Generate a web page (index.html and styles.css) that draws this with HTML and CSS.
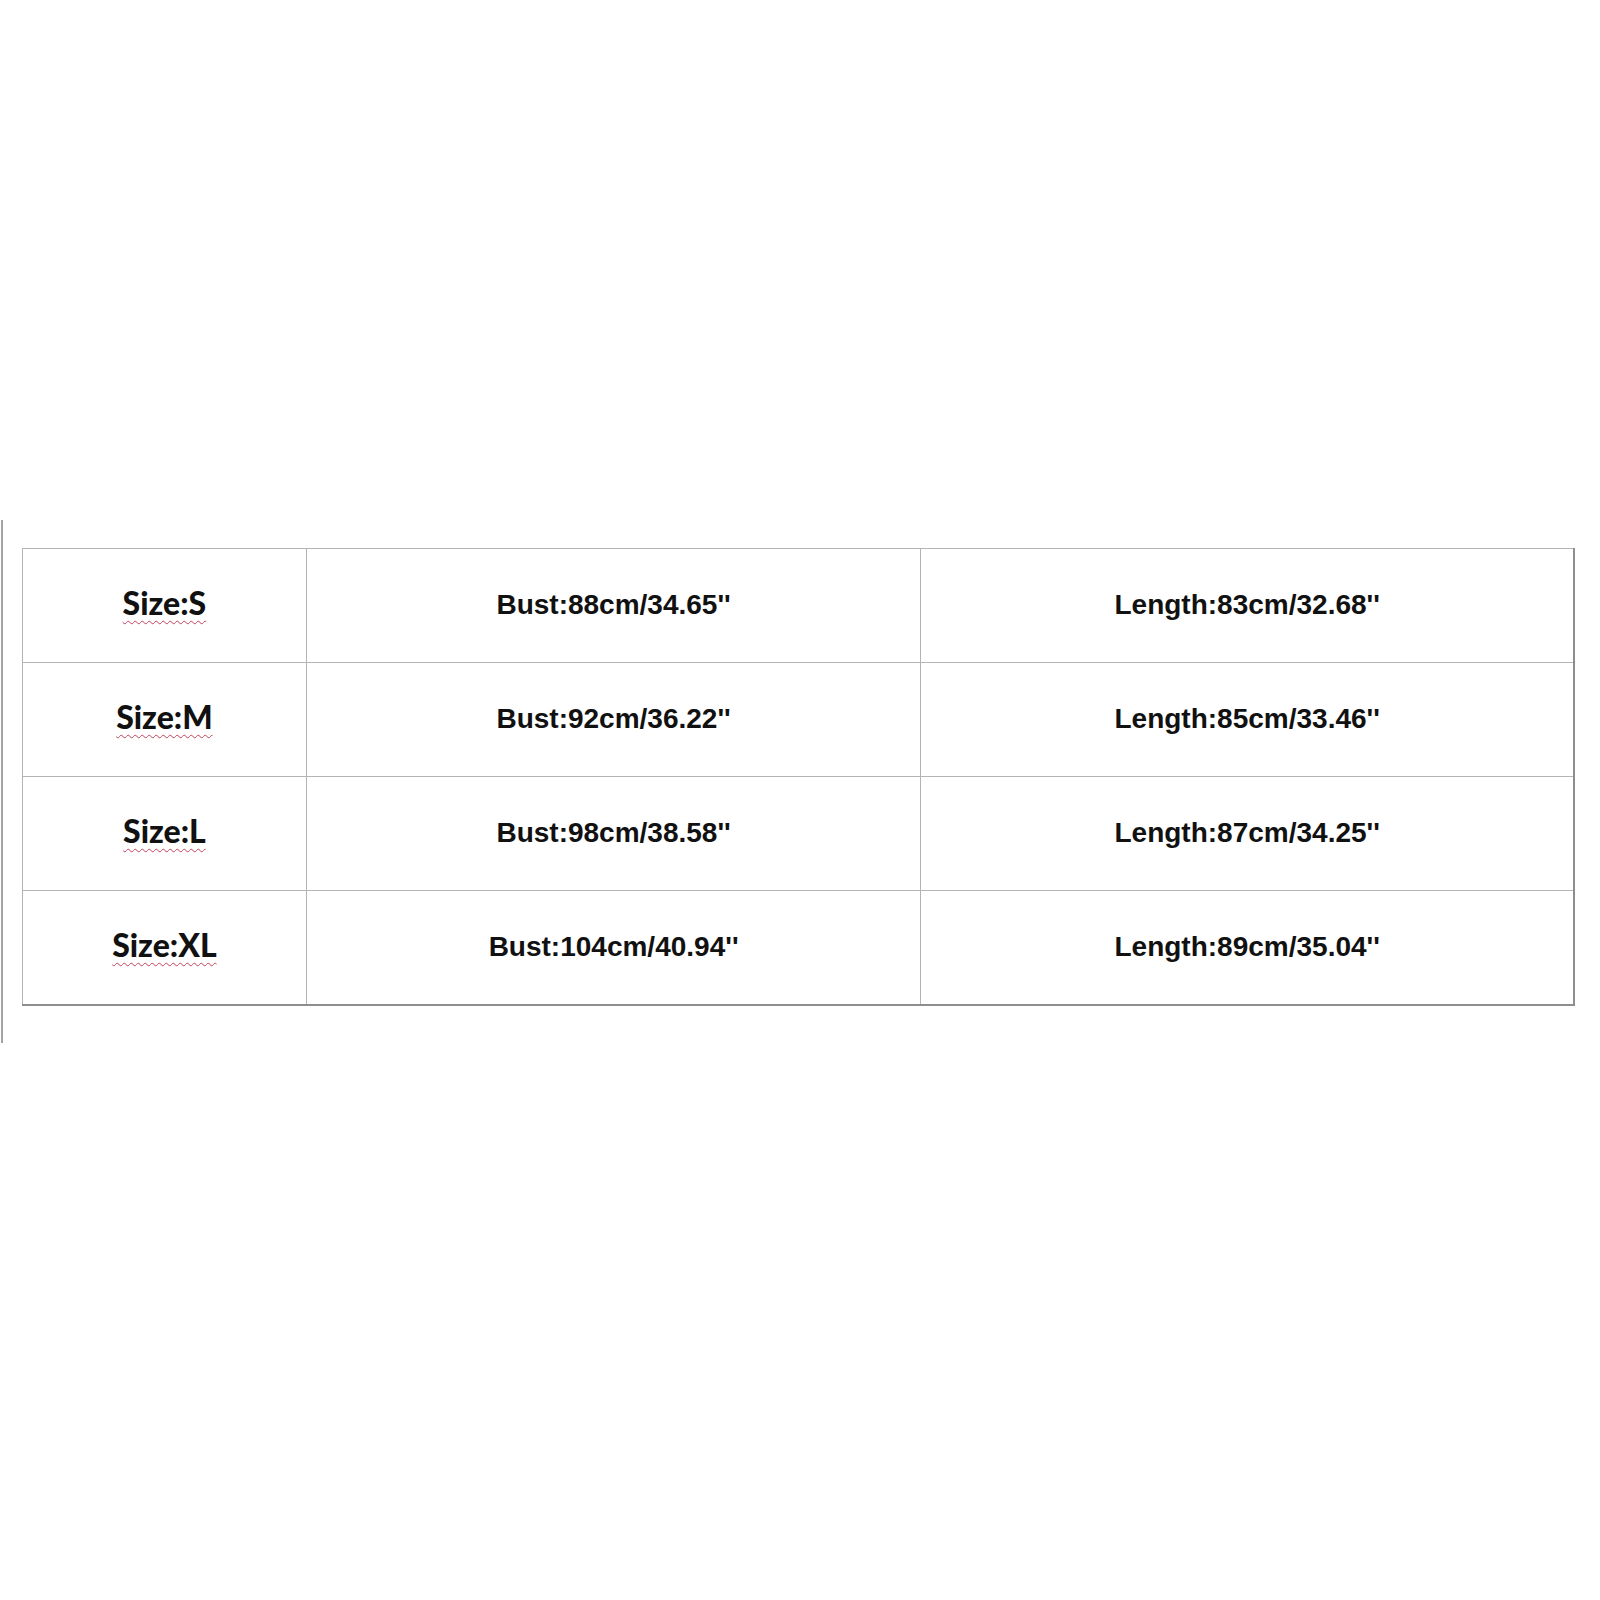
FILE: index.html
```html
<!DOCTYPE html>
<html>
<head>
<meta charset="utf-8">
<link rel="stylesheet" href="styles.css">
</head>
<body>
<div class="page">
  <div class="rule"></div>
  <table class="sizes">
    <tr>
      <td class="c-size"><span class="wavy">Size:S</span></td>
      <td class="c-bust">Bust:88cm/34.65''</td>
      <td class="c-len">Length:83cm/32.68''</td>
    </tr>
    <tr>
      <td class="c-size"><span class="wavy">Size:M</span></td>
      <td class="c-bust">Bust:92cm/36.22''</td>
      <td class="c-len">Length:85cm/33.46''</td>
    </tr>
    <tr>
      <td class="c-size"><span class="wavy">Size:L</span></td>
      <td class="c-bust">Bust:98cm/38.58''</td>
      <td class="c-len">Length:87cm/34.25''</td>
    </tr>
    <tr>
      <td class="c-size"><span class="wavy">Size:XL</span></td>
      <td class="c-bust">Bust:104cm/40.94''</td>
      <td class="c-len">Length:89cm/35.04''</td>
    </tr>
  </table>
</div>
</body>
</html>
```
FILE: styles.css
```css
html, body {
  margin: 0;
  padding: 0;
  background: #ffffff;
}
.page {
  display: flex;
  align-items: flex-start;
  padding-top: 520px;
  height: 1080px;
}
.rule {
  width: 2px;
  height: 523px;
  margin-left: 1px;
  background: #a3a3a3;
  flex: none;
}
.sizes {
  margin-top: 28px;
  margin-left: 19px;
  width: 1553px;
  border-collapse: collapse;
  border-right: 2px solid #8e8e8e;
  border-bottom: 2px solid #8e8e8e;
  font-family: "Liberation Sans", Arial, sans-serif;
  font-weight: bold;
  color: #111111;
}
.sizes td {
  border: 1px solid #b4b4b4;
  height: 111px;
  padding: 0 0 2px 0;
  text-align: center;
  vertical-align: middle;
  font-size: 28px;
}
.c-size { width: 283px; }
.c-bust { width: 614px; }
.c-len { width: 652px; }
.sizes td.c-size {
  font-family: Lato, "Open Sans", sans-serif;
  font-size: 32px;
  font-weight: 900;
  padding-bottom: 6px;
  height: 107px;
}
.wavy {
  text-decoration: underline wavy #c8405a;
  text-decoration-thickness: 1px;
  text-underline-offset: 5px;
}
```
